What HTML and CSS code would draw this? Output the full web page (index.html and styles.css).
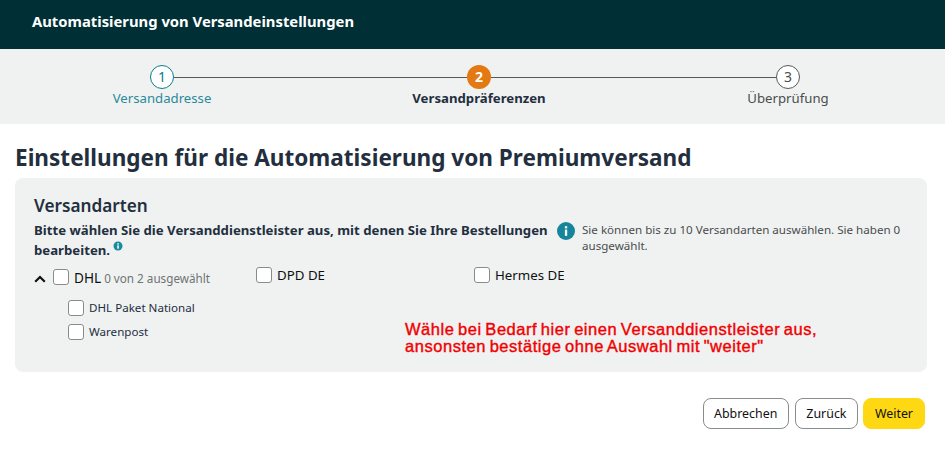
FILE: index.html
```html
<!DOCTYPE html>
<html lang="de">
<head>
<meta charset="utf-8">
<title>Automatisierung von Versandeinstellungen</title>
<link rel="stylesheet" href="styles.css">
</head>
<body>
<header class="topbar">Automatisierung von Versandeinstellungen</header>
<nav class="stepper">
  <div class="step step-done"><span class="dot">1</span><span class="step-label">Versandadresse</span></div>
  <div class="line line-a"></div>
  <div class="step step-current"><span class="dot">2</span><span class="step-label">Versandpräferenzen</span></div>
  <div class="line line-b"></div>
  <div class="step step-next"><span class="dot">3</span><span class="step-label">Überprüfung</span></div>
</nav>
<main class="main">
  <h1 class="title">Einstellungen für die Automatisierung von Premiumversand</h1>
  <section class="card">
    <h2 class="card-title">Versandarten</h2>
    <div class="intro">
      <p class="lead">Bitte wählen Sie die Versanddienstleister aus, mit denen Sie Ihre Bestellungen bearbeiten.<svg class="tip" viewBox="0 0 10 10" width="10" height="10"><circle cx="5" cy="5" r="4.5" fill="#1a8a9e"/><rect x="4.3" y="4.3" width="1.5" height="3.4" fill="#fff"/><rect x="4.3" y="2.2" width="1.5" height="1.4" fill="#fff"/></svg></p>
      <div class="note">
        <svg class="note-icon" viewBox="0 0 18 18" width="18" height="18"><circle cx="9" cy="9" r="9" fill="#16859c"/><rect x="7.9" y="7.6" width="2.3" height="6.2" fill="#fff"/><rect x="7.9" y="4.2" width="2.3" height="2.2" fill="#fff"/></svg>
        <p class="note-text">Sie können bis zu 10 Versandarten auswählen. Sie haben 0 ausgewählt.</p>
      </div>
    </div>
    <div class="carriers">
      <div class="carrier carrier-dhl">
        <div class="opt">
          <svg class="chev" viewBox="0 0 12 8" width="12" height="8"><path d="M1.2 6.8 6 2l4.8 4.8" fill="none" stroke="#0f1111" stroke-width="2.2"/></svg>
          <span class="box box-low"></span><span class="opt-name opt-low">DHL</span><span class="count">0 von 2 ausgewählt</span>
        </div>
        <div class="sub"><span class="box"></span><span class="sub-name">DHL Paket National</span></div>
        <div class="sub"><span class="box"></span><span class="sub-name">Warenpost</span></div>
      </div>
      <div class="carrier carrier-dpd"><div class="opt"><span class="box"></span><span class="opt-name opt-small">DPD DE</span></div></div>
      <div class="carrier"><div class="opt"><span class="box"></span><span class="opt-name opt-small">Hermes DE</span></div></div>
    </div>
    <p class="annotation">Wähle bei Bedarf hier einen Versanddienstleister aus,<br>ansonsten bestätige ohne Auswahl mit "weiter"</p>
  </section>
  <div class="actions">
    <button class="btn btn-cancel">Abbrechen</button>
    <button class="btn">Zurück</button>
    <button class="btn btn-primary">Weiter</button>
  </div>
</main>
</body>
</html>
```
FILE: styles.css
```css
* { box-sizing: border-box; }
html, body { margin: 0; padding: 0; }
body {
  width: 945px;
  height: 452px;
  overflow: hidden;
  background: #fff;
  color: #0f1111;
  font-family: "Noto Sans", "Open Sans", sans-serif;
}
p, h1, h2 { margin: 0; }

.topbar {
  height: 49px;
  padding: 11px 32px 0;
  background: #002f36;
  color: #fff;
  font-size: 14.8px;
  line-height: 20px;
  font-weight: 700;
}

.stepper {
  height: 75px;
  padding: 16px 0 0 150px;
  background: #f0f2f2;
  display: flex;
  align-items: flex-start;
}
.step {
  width: 24px;
  display: flex;
  flex-direction: column;
  align-items: center;
}
.dot {
  flex: none;
  width: 24px;
  height: 24px;
  border-radius: 50%;
  border: 1px solid #565959;
  background: #fff;
  display: flex;
  align-items: center;
  justify-content: center;
  font-size: 14px;
  line-height: 20px;
  color: #494d4d;
}
.step-label {
  white-space: nowrap;
  font-size: 13.2px;
  line-height: 18px;
  color: #494d4d;
}
.step-done .dot { border-color: #067d8d; color: #067d8d; }
.step-done .step-label { color: #2a8a9a; }
.step-current .dot { border: 0; background: #e47911; color: #fff; font-weight: 700; }
.step-current .step-label { color: #232f3e; font-weight: 700; }
.line { flex: none; height: 1px; margin-top: 12px; background: #565959; }
.line-a { width: 293px; }
.line-b { width: 285px; }

.main { padding: 0 18px 0 15px; }
.title {
  margin: 18px 0 0 0;
  height: 36px;
  font-size: 22.55px;
  line-height: 32px;
  font-weight: 700;
  color: #232f3e;
  white-space: nowrap;
}

.card {
  position: relative;
  height: 194px;
  padding: 16px 19px 0;
  background: #f0f2f2;
  border-radius: 8px;
}
.card-title {
  font-size: 17.2px;
  line-height: 24px;
  font-weight: 600;
  color: #232f3e;
}
.intro { display: flex; margin-top: 2px; }
.lead {
  flex: none;
  width: 523px;
  font-size: 13.2px;
  line-height: 20px;
  font-weight: 700;
  color: #232f3e;
}
.tip { margin-left: 3px; vertical-align: 4px; }
.note { display: flex; padding-top: 2px; }
.note-icon { flex: none; margin-right: 7px; }
.note-text {
  width: 326px;
  font-size: 11.6px;
  line-height: 16px;
  color: #494d4d;
}

.carriers { display: flex; margin-top: 5px; }
.carrier-dhl { width: 222px; }
.carrier-dpd { width: 218px; }
.opt { display: flex; align-items: center; height: 20px; }
.chev { margin-right: 7px; margin-top: 7px; }
.box {
  flex: none;
  width: 16px;
  height: 16px;
  background: #fff;
  border: 1px solid #888c8c;
  border-radius: 3px;
}
.box-low { margin-top: 4px; }
.opt-name { margin-left: 5px; font-size: 13.6px; line-height: 20px; color: #0f1111; }
.opt-low { margin-top: 5px; }
.opt-small { font-size: 13.3px; }
.count { margin-left: 3px; margin-top: 5px; font-size: 11.7px; line-height: 20px; color: #6f7373; }
.sub { display: flex; align-items: center; height: 24px; margin-left: 34px; }
.opt + .sub { margin-top: 11px; }
.sub-name { margin-left: 5px; font-size: 11.6px; line-height: 16px; color: #232f3e; }

.annotation {
  position: absolute;
  left: 390px;
  top: 143px;
  font-family: "Liberation Sans", Arial, sans-serif;
  font-size: 16.5px;
  line-height: 17px;
  letter-spacing: 0.54px;
  word-spacing: -1.5px;
  -webkit-text-stroke: 0.4px #f00000;
  color: #f00000;
  white-space: nowrap;
}

.actions {
  display: flex;
  justify-content: flex-end;
  gap: 5px;
  margin-top: 26px;
  margin-right: 2px;
}
.btn {
  height: 31px;
  padding: 0 10.5px;
  border: 1px solid #888c8c;
  border-radius: 8px;
  background: #fff;
  color: #0f1111;
  font-family: inherit;
  font-size: 12.4px;
}
.btn-cancel { margin-right: 1px; }
.btn-primary { padding: 0 11px; border-color: #ffd814; background: #ffd814; }
```
